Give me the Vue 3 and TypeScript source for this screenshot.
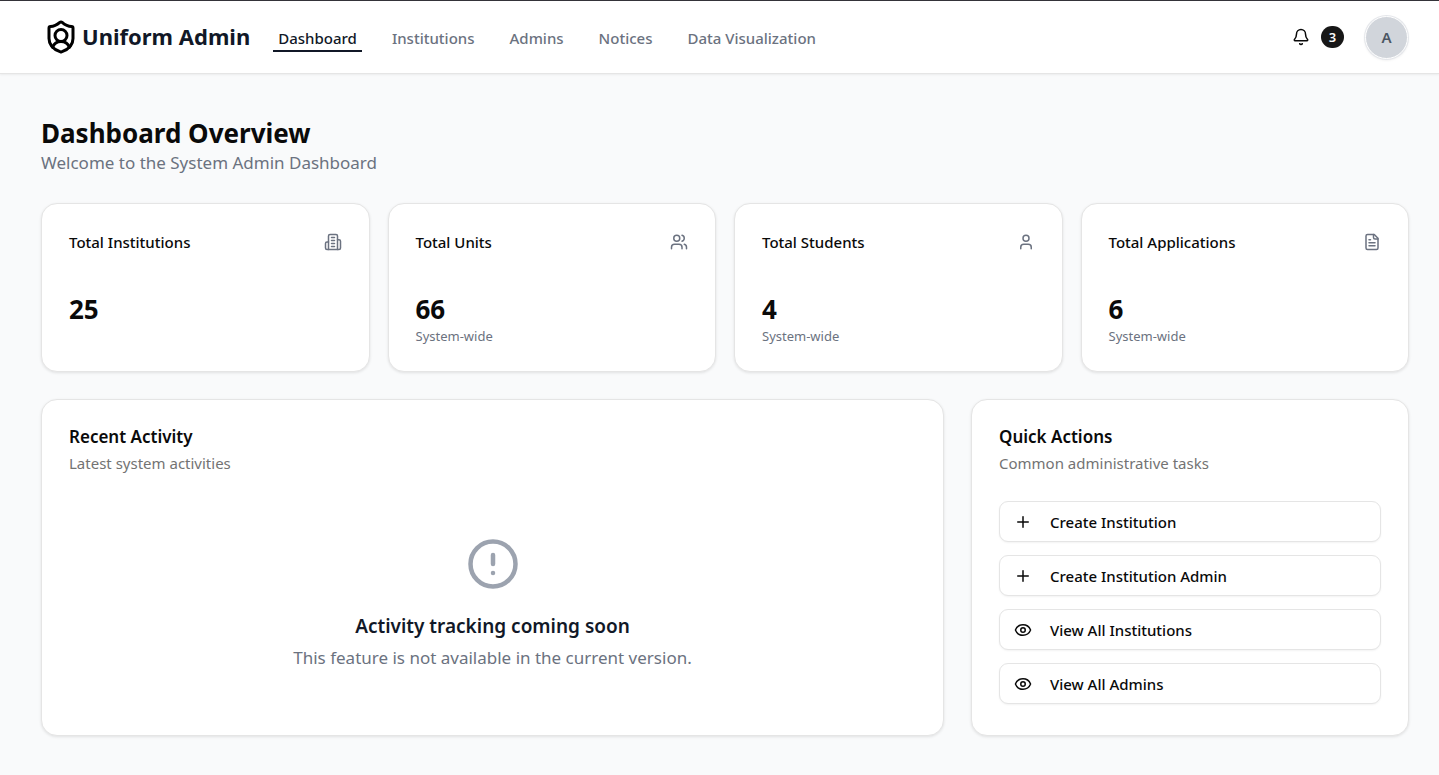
<script setup lang="ts">
interface Stat {
  label: string
  value: number
  note?: string
  icon: string[]
}

interface Action {
  label: string
  icon: string[]
}

const navItems: string[] = ['Dashboard', 'Institutions', 'Admins', 'Notices', 'Data Visualization']
const active = 'Dashboard'

const plus: string[] = ['M5 12h14', 'M12 5v14']
const eye: string[] = [
  'M2.062 12.348a1 1 0 0 1 0-.696 10.75 10.75 0 0 1 19.876 0 1 1 0 0 1 0 .696 10.75 10.75 0 0 1-19.876 0',
  'M15 12a3 3 0 1 1-6 0a3 3 0 1 1 6 0',
]

const stats: Stat[] = [
  {
    label: 'Total Institutions',
    value: 25,
    icon: [
      'M6 22V4a2 2 0 0 1 2-2h8a2 2 0 0 1 2 2v18Z',
      'M6 12H4a2 2 0 0 0-2 2v6a2 2 0 0 0 2 2h2',
      'M18 9h2a2 2 0 0 1 2 2v9a2 2 0 0 1-2 2h-2',
      'M10 6h4',
      'M10 10h4',
      'M10 14h4',
      'M10 18h4',
    ],
  },
  {
    label: 'Total Units',
    value: 66,
    note: 'System-wide',
    icon: [
      'M16 21v-2a4 4 0 0 0-4-4H6a4 4 0 0 0-4 4v2',
      'M13 7a4 4 0 1 1-8 0a4 4 0 1 1 8 0',
      'M22 21v-2a4 4 0 0 0-3-3.87',
      'M16 3.13a4 4 0 0 1 0 7.75',
    ],
  },
  {
    label: 'Total Students',
    value: 4,
    note: 'System-wide',
    icon: ['M19 21v-2a4 4 0 0 0-4-4H9a4 4 0 0 0-4 4v2', 'M16 7a4 4 0 1 1-8 0a4 4 0 1 1 8 0'],
  },
  {
    label: 'Total Applications',
    value: 6,
    note: 'System-wide',
    icon: [
      'M15 2H6a2 2 0 0 0-2 2v16a2 2 0 0 0 2 2h12a2 2 0 0 0 2-2V7Z',
      'M14 2v4a2 2 0 0 0 2 2h4',
      'M10 9H8',
      'M16 13H8',
      'M16 17H8',
    ],
  },
]

const actions: Action[] = [
  { label: 'Create Institution', icon: plus },
  { label: 'Create Institution Admin', icon: plus },
  { label: 'View All Institutions', icon: eye },
  { label: 'View All Admins', icon: eye },
]
</script>

<template>
  <div class="page">
    <header class="topbar">
      <a class="brand" href="#">
        <svg class="icon logo" viewBox="0 0 24 24" aria-hidden="true">
          <path d="M20 13c0 5-3.5 7.5-7.66 8.95a1 1 0 0 1-.67-.01C7.5 20.5 4 18 4 13V6a1 1 0 0 1 1-1c2 0 4.5-1.2 6.24-2.72a1.17 1.17 0 0 1 1.52 0C14.51 3.81 17 5 19 5a1 1 0 0 1 1 1z" />
          <path d="M6.376 18.91a6 6 0 0 1 11.249.003" />
          <circle cx="12" cy="11" r="4" />
        </svg>
        <span>Uniform Admin</span>
      </a>
      <nav class="nav">
        <a
          v-for="item in navItems"
          :key="item"
          href="#"
          class="nav-link"
          :class="{ current: item === active }"
          :aria-current="item === active ? 'page' : undefined"
        >{{ item }}</a>
      </nav>
      <div class="tools">
        <button type="button" class="alerts" aria-label="Notifications">
          <svg class="icon" viewBox="0 0 24 24" aria-hidden="true">
            <path d="M10.268 21a2 2 0 0 0 3.464 0" />
            <path d="M3.262 15.326A1 1 0 0 0 4 17h16a1 1 0 0 0 .74-1.673C19.41 13.956 18 12.499 18 8A6 6 0 0 0 6 8c0 4.499-1.411 5.956-2.738 7.326" />
          </svg>
          <span class="count">3</span>
        </button>
        <button type="button" class="avatar" aria-label="Account">A</button>
      </div>
    </header>

    <main class="main">
      <h1>Dashboard Overview</h1>
      <p class="lead">Welcome to the System Admin Dashboard</p>

      <section class="stats">
        <article v-for="stat in stats" :key="stat.label" class="card stat">
          <div class="stat-head">
            <h2>{{ stat.label }}</h2>
            <svg class="icon" viewBox="0 0 24 24" aria-hidden="true">
              <path v-for="d in stat.icon" :key="d" :d="d" />
            </svg>
          </div>
          <div class="value">{{ stat.value }}</div>
          <p v-if="stat.note" class="note">{{ stat.note }}</p>
        </article>
      </section>

      <section class="panels">
        <article class="card panel activity">
          <h2>Recent Activity</h2>
          <p class="desc">Latest system activities</p>
          <div class="empty">
            <svg class="icon alert" viewBox="0 0 24 24" aria-hidden="true">
              <circle cx="12" cy="12" r="10" />
              <path d="M12 8v4" />
              <path d="M12 16h.01" />
            </svg>
            <h3>Activity tracking coming soon</h3>
            <p>This feature is not available in the current version.</p>
          </div>
        </article>

        <article class="card panel">
          <h2>Quick Actions</h2>
          <p class="desc">Common administrative tasks</p>
          <div class="actions">
            <button v-for="action in actions" :key="action.label" type="button" class="action">
              <svg class="icon" viewBox="0 0 24 24" aria-hidden="true">
                <path v-for="d in action.icon" :key="d" :d="d" />
              </svg>
              <span>{{ action.label }}</span>
            </button>
          </div>
        </article>
      </section>
    </main>
  </div>
</template>

<style>
body {
  margin: 0;
  background: #f9fafb;
}
</style>

<style scoped>
.page {
  box-sizing: border-box;
  min-height: 100vh;
  border-top: 1px solid #35343a;
  background: #f9fafb;
  color: #0a0a0a;
  font-family: "Segoe UI", "Noto Sans", "Open Sans", sans-serif;
}

.page * {
  box-sizing: border-box;
}

h1,
h2,
h3,
p {
  margin: 0;
}

a {
  text-decoration: none;
}

button {
  font-family: inherit;
  color: inherit;
  cursor: pointer;
}

.icon {
  flex: none;
  width: 18px;
  height: 18px;
  fill: none;
  stroke: currentColor;
  stroke-width: 2;
  stroke-linecap: round;
  stroke-linejoin: round;
}

.topbar {
  display: flex;
  align-items: center;
  height: 73px;
  padding: 0 31px 0 43px;
  border-bottom: 1px solid #e5e5e5;
  background: #fff;
  box-shadow: 0 1px 2px rgba(0, 0, 0, 0.06);
}

.brand {
  display: flex;
  align-items: center;
  gap: 3px;
  color: #111827;
  font-size: 22px;
  font-weight: 700;
  line-height: 32px;
}

.brand span {
  padding-bottom: 2px;
}

.logo {
  width: 36px;
  height: 36px;
  color: #000;
}

.nav {
  display: flex;
  gap: 25px;
  margin-left: 23px;
  padding-top: 4px;
}

.nav-link {
  padding: 0 5px;
  border-bottom: 2px solid transparent;
  color: #6b7280;
  font-size: 15px;
  font-weight: 500;
  line-height: 24px;
}

.nav-link.current {
  border-color: #111827;
  color: #111827;
}

.tools {
  display: flex;
  align-items: center;
  gap: 21px;
  margin-left: auto;
}

.alerts {
  display: flex;
  align-items: center;
  gap: 11px;
  padding: 0;
  border: 0;
  background: none;
}

.count {
  width: 23px;
  height: 22px;
  border-radius: 11px;
  background: #171717;
  color: #fafafa;
  font-size: 13px;
  font-weight: 600;
  line-height: 22px;
  text-align: center;
}

.avatar {
  width: 43px;
  height: 43px;
  padding: 0;
  border: 1px solid #fff;
  border-radius: 50%;
  background: #d1d5db;
  box-shadow: 0 0 0 1px #e5e7eb, 0 1px 3px rgba(0, 0, 0, 0.1);
  color: #4b5563;
  font-size: 15px;
  font-weight: 600;
}

.main {
  padding: 42px 30px 38px 41px;
}

h1 {
  font-size: 26px;
  font-weight: 700;
  line-height: 34px;
}

.lead {
  color: #6b7280;
  font-size: 17px;
  line-height: 26px;
}

.stats {
  display: grid;
  grid-template-columns: repeat(4, 1fr);
  gap: 18px;
  margin-top: 27px;
}

.card {
  border: 1px solid #e5e5e5;
  border-radius: 16px;
  background: #fff;
  box-shadow: 0 1px 3px rgba(0, 0, 0, 0.1);
}

.stat {
  padding: 27px 27px 26px;
}

.stat-head {
  display: flex;
  align-items: center;
  justify-content: space-between;
  color: #6b7280;
}

.stat-head h2 {
  color: #0a0a0a;
  font-size: 15px;
  font-weight: 500;
  line-height: 22px;
}

.value {
  margin-top: 38px;
  font-size: 26px;
  font-weight: 700;
  line-height: 36px;
}

.note {
  color: #6b7280;
  font-size: 13px;
  line-height: 18px;
}

.panels {
  display: grid;
  grid-template-columns: repeat(3, 1fr);
  gap: 27px;
  margin-top: 27px;
}

.panel {
  display: flex;
  flex-direction: column;
  padding: 26px 27px 31px;
}

.activity {
  grid-column: span 2;
}

.panel h2 {
  font-size: 17px;
  font-weight: 600;
  line-height: 22px;
}

.desc {
  margin-top: 4px;
  color: #737373;
  font-size: 15px;
  line-height: 22px;
}

.empty {
  display: flex;
  flex: 1;
  flex-direction: column;
  align-items: center;
  justify-content: center;
  padding-top: 30px;
  text-align: center;
}

.alert {
  width: 54px;
  height: 54px;
  color: #9ca3af;
}

.empty h3 {
  margin-top: 19px;
  color: #111827;
  font-size: 19px;
  font-weight: 600;
  line-height: 32px;
}

.empty p {
  margin-top: 2px;
  color: #6b7280;
  font-size: 17px;
  line-height: 28px;
}

.actions {
  display: flex;
  flex-direction: column;
  gap: 13px;
  margin-top: 27px;
}

.action {
  display: flex;
  align-items: center;
  gap: 18px;
  height: 41px;
  padding: 0 14px;
  border: 1px solid #e5e5e5;
  border-radius: 9px;
  background: #fff;
  box-shadow: 0 1px 2px rgba(0, 0, 0, 0.05);
  font-size: 15px;
  font-weight: 500;
}
</style>
